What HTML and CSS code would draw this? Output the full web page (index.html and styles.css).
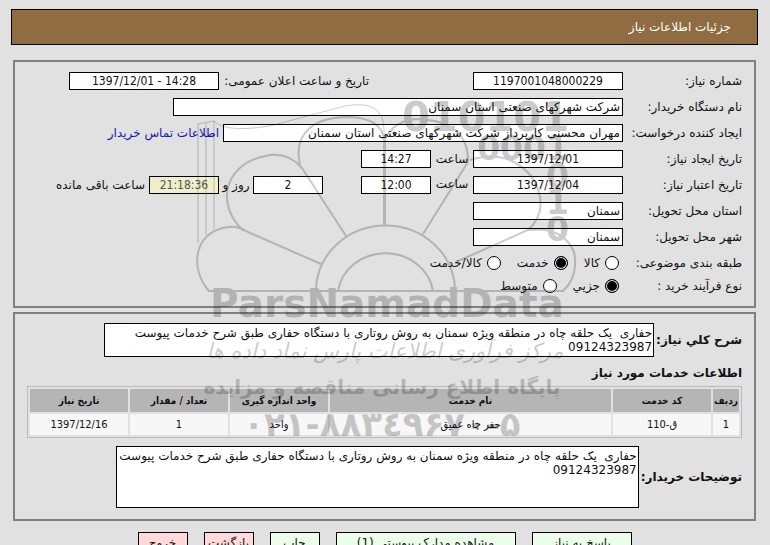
FILE: index.html
```html
<!DOCTYPE html>
<html lang="fa" dir="rtl">
	<head>
		<meta charset="utf-8" />
		<title>جزئیات اطلاعات نیاز</title>
		<link rel="stylesheet" href="styles.css">
	</head>
	<body>
		<h1 class="title_bar">جزئیات اطلاعات نیاز</h1>
		<form class="need_form">
			<div class="panel">
				<div class="row">
					<label class="caption" for="needNum">شماره نیاز:</label>
					<div class="first_part"><input type="text" class="field w150 center" id="needNum" value="1197001048000229"></div>
					<label class="announce" for="announceDate">تاریخ و ساعت اعلان عمومی:</label>
					<input type="text" class="field w150 center" id="announceDate" value="1397/12/01 - 14:28" dir="ltr">
				</div>
				<div class="row">
					<label class="caption" for="buyerOrg">نام دستگاه خریدار:</label>
					<input type="text" class="field w450" id="buyerOrg" value="شرکت شهرکهای صنعتی استان سمنان">
				</div>
				<div class="row">
					<label class="caption" for="requester">ایجاد کننده درخواست:</label>
					<input type="text" class="field w400" id="requester" value="مهران محسنی کارپرداز شرکت شهرکهای صنعتی استان سمنان">
					<a class="contact_link" href="#">اطلاعات تماس خریدار</a>
				</div>
				<div class="row">
					<label class="caption" for="createDate">تاریخ ایجاد نیاز:</label>
					<input type="text" class="field w150 center" id="createDate" value="1397/12/01">
					<label class="hour" for="createTime">ساعت</label>
					<input type="text" class="field w70 center" id="createTime" value="14:27">
				</div>
				<div class="row">
					<label class="caption" for="validDate">تاریخ اعتبار نیاز:</label>
					<div class="date_part">
						<input type="text" class="field w150 center" id="validDate" value="1397/12/04">
						<label class="hour" for="validTime">ساعت</label>
						<input type="text" class="field w70 center" id="validTime" value="12:00">
					</div>
					<input type="text" class="field w70 center" id="daysLeft" value="2">
					<label class="days" for="daysLeft">روز و</label>
					<input type="text" class="field w70 center countdown" id="timeLeft" value="21:18:36">
					<label class="remain" for="timeLeft">ساعت باقی مانده</label>
				</div>
				<div class="row">
					<label class="caption" for="province">استان محل تحویل:</label>
					<input type="text" class="field w150" id="province" value="سمنان">
				</div>
				<div class="row">
					<label class="caption" for="city">شهر محل تحویل:</label>
					<input type="text" class="field w150" id="city" value="سمنان">
				</div>
				<div class="row radio_row">
					<span class="caption">طبقه بندی موضوعی:</span>
					<label class="choice"><input type="radio" name="category">کالا</label>
					<label class="choice"><input type="radio" name="category" checked>خدمت</label>
					<label class="choice"><input type="radio" name="category">کالا/خدمت</label>
				</div>
				<div class="row radio_row">
					<span class="caption">نوع فرآیند خرید :</span>
					<label class="choice"><input type="radio" name="process" checked>جزیي</label>
					<label class="choice"><input type="radio" name="process">متوسط</label>
				</div>
			</div>
			<div class="panel detail_panel">
				<div class="text_row">
					<label for="summary">شرح کلي نیاز:</label>
					<textarea class="summary" id="summary">حفاری  یک حلقه چاه در منطقه ویژه سمنان به روش روتاری با دستگاه حفاری طبق شرح خدمات پیوست 09124323987</textarea>
				</div>
				<h2 class="sub_title">اطلاعات خدمات مورد نیاز</h2>
				<table class="services">
					<thead>
						<tr>
							<th class="col_row">ردیف</th>
							<th class="col_code">کد خدمت</th>
							<th>نام خدمت</th>
							<th class="col_small">واحد اندازه گیری</th>
							<th class="col_small">تعداد / مقدار</th>
							<th class="col_small">تاریخ نیاز</th>
						</tr>
					</thead>
					<tbody>
						<tr>
							<td>1</td>
							<td>ق-110</td>
							<td>حفر چاه عمیق</td>
							<td>واحد</td>
							<td>1</td>
							<td>1397/12/16</td>
						</tr>
					</tbody>
				</table>
				<div class="text_row notes_row">
					<label for="notes">توضیحات خریدار:</label>
					<textarea class="notes" id="notes">حفاری  یک حلقه چاه در منطقه ویژه سمنان به روش روتاری با دستگاه حفاری طبق شرح خدمات پیوست 09124323987</textarea>
				</div>
			</div>
			<div class="buttons">
				<button type="button" class="btn w100">پاسخ به نیاز</button>
				<button type="button" class="btn w180">مشاهده مدارک پیوستی (1)</button>
				<button type="button" class="btn">چاپ</button>
				<button type="button" class="btn btn_red">بازگشت</button>
				<button type="button" class="btn btn_red">خروج</button>
			</div>
		</form>
		<!-- watermark, lies over the whole form -->
		<svg class="watermark" width="390" height="370" viewBox="190 90 390 370" aria-hidden="true">
			<g fill="none" stroke="#000" stroke-width="2">
				<path d="M209 291C190 270 192 231 229 227Q238 226 248 232L321 264"/>
				<path d="M244 231C216 207 222 165 265 156Q287 151 302 168L346 236"/>
				<path d="M300 165C294 139 307 118 346 117Q381 117 384 139V225"/>
				<path d="M385 225V140Q392 122 415 119Q469 120 468 162L423 234"/>
				<path d="M470 160Q508 148 532 177Q551 209 528 230L456 262"/>
				<path d="M528 230Q563 226 574 252Q579 276 563 291"/>
				<path d="M316 291A69 65 0 0 1 455 291M338 291A48 44 0 0 1 433 291M208 291H564" />
				<path d="M198 243V124L214 121V230M206 235V122M214 121Q225 133 270 126L345 106Q384 99 384 130V225" stroke-width="1"/>
			</g>
			<g class="digits">
				<text class="top_digits" x="569" y="131">010101</text>
				<text x="569" y="160">0001</text>
				<text x="569" y="188">0</text>
				<text x="569" y="214">1</text>
				<text x="569" y="241">0</text>
			</g>
			<text class="brand" x="387" y="317">ParsNamadData</text>
			<text class="slogan" x="385" y="358">مرکز فرآوری اطلاعات پارس نماد داده ها</text>
			<text class="tagline" x="382" y="394">پایگاه اطلاع رسانی مناقصه و مزایده</text>
			<text class="phone" x="382" y="436">۰۲۱-۸۸۳٤۹۶۷۰-۵</text>
		</svg>
	</body>
</html>
```
FILE: styles.css
```css
* {
	box-sizing: border-box;
}
body {
	margin: 0;
	padding: 9px 12px 0 11px;
	background: #e1e1e1;
	color: #111;
	font: 12px/16px "DejaVu Sans", sans-serif;
	position: relative;
	overflow: hidden;
}
input, textarea, button {
	font: inherit;
	color: inherit;
}
.title_bar {
	margin: 0;
	padding: 9px 26px;
	border: 1px solid #000;
	background: #8f6c41;
	color: #fff;
	font-size: 12px;
	font-weight: normal;
	line-height: 16px;
}
.need_form {
	margin: 15px 2px 0;
}
.panel {
	padding: 10px 12px 6px;
	border: 2px solid #808080;
	margin-bottom: 4px;
}
.row {
	display: flex;
	align-items: center;
	height: 18px;
	margin-bottom: 8px;
	white-space: nowrap;
}
.caption {
	width: 119px;
}
.field {
	height: 18px;
	padding: 0 2px;
	border: 1px solid #000;
	background: #fff;
}
.center {
	font-family: "DejaVu Sans Condensed", "DejaVu Sans", sans-serif;
	text-align: center;
}
.w70 {
	width: 70px;
}
.w150 {
	width: 150px;
}
.w400 {
	width: 400px;
}
.w450 {
	width: 450px;
}
.first_part {
	display: flex;
	width: 254px;
}
.date_part {
	display: flex;
	width: 300px;
}
.announce {
	width: 150px;
}
.hour {
	width: 42px;
	text-align: center;
}
.days {
	width: 34px;
	text-align: center;
}
.remain, .contact_link {
	margin-right: 4px;
}
.countdown {
	background: #f0eecb;
	color: #555;
}
.contact_link {
	color: #1a14b4;
	text-decoration: none;
}
.radio_row {
	margin-bottom: 5px;
}
.choice {
	display: flex;
	align-items: center;
	gap: 5px;
	margin: 0 4px 0 12px;
}
.choice input {
	appearance: none;
	width: 14px;
	height: 14px;
	margin: 0;
	border: 1px solid #000;
	border-radius: 50%;
	background: #fff;
}
.choice input:checked {
	background: #000;
	box-shadow: inset 0 0 0 1px #fff;
}
.detail_panel {
	padding: 9px 12px 11px;
}
.text_row {
	display: flex;
	align-items: center;
	gap: 2px;
	font-weight: bold;
}
.text_row textarea {
	padding: 2px 1px;
	border: 1px solid #000;
	background: #fff;
	font-weight: normal;
	line-height: 14px;
	resize: none;
	overflow: hidden;
}
.summary {
	width: 550px;
	height: 34px;
}
.sub_title {
	margin: 8px 0 5px;
	font-size: 12px;
	line-height: 16px;
}
.services {
	width: 100%;
	table-layout: fixed;
	border: 1px solid #bbb;
	border-spacing: 2px;
	font: 11px/16px "DejaVu Sans Condensed", "DejaVu Sans", sans-serif;
	text-align: center;
}
.services th, .services td {
	padding: 0;
	white-space: nowrap;
}
.services th {
	height: 23px;
	background: #b5b5b5;
	font-size: 10px;
}
.services td {
	height: 21px;
	background: #f7f7f7;
}
.col_row {
	width: 26px;
}
.col_code, .col_small {
	width: 98px;
}
.notes_row {
	margin-top: 8px;
}
.notes {
	width: 523px;
	height: 62px;
}
.buttons {
	display: flex;
	justify-content: center;
	gap: 16px;
	margin-top: 11px;
}
.btn {
	width: 50px;
	height: 22px;
	padding: 0;
	border: 1px solid #000;
	background: #ebffeb;
	white-space: nowrap;
}
.btn_red {
	background: #ffd9dc;
}
.w100 {
	width: 100px;
}
.w180 {
	width: 180px;
}
.watermark {
	position: absolute;
	left: 190px;
	top: 90px;
	opacity: 0.2;
	pointer-events: none;
}
.watermark text {
	text-anchor: middle;
}
.watermark .digits text {
	font: bold 33px "DejaVu Sans", sans-serif;
	direction: ltr;
	text-anchor: end;
}
.watermark .digits .top_digits {
	font-size: 40px;
}
.watermark .brand {
	font: bold 39px "DejaVu Sans", sans-serif;
	direction: ltr;
}
.watermark .slogan {
	font: italic 21px "DejaVu Sans", sans-serif;
}
.watermark .tagline {
	font: bold 20px "DejaVu Sans", sans-serif;
}
.watermark .phone {
	font: bold 34px "DejaVu Sans", sans-serif;
	direction: ltr;
}
```
